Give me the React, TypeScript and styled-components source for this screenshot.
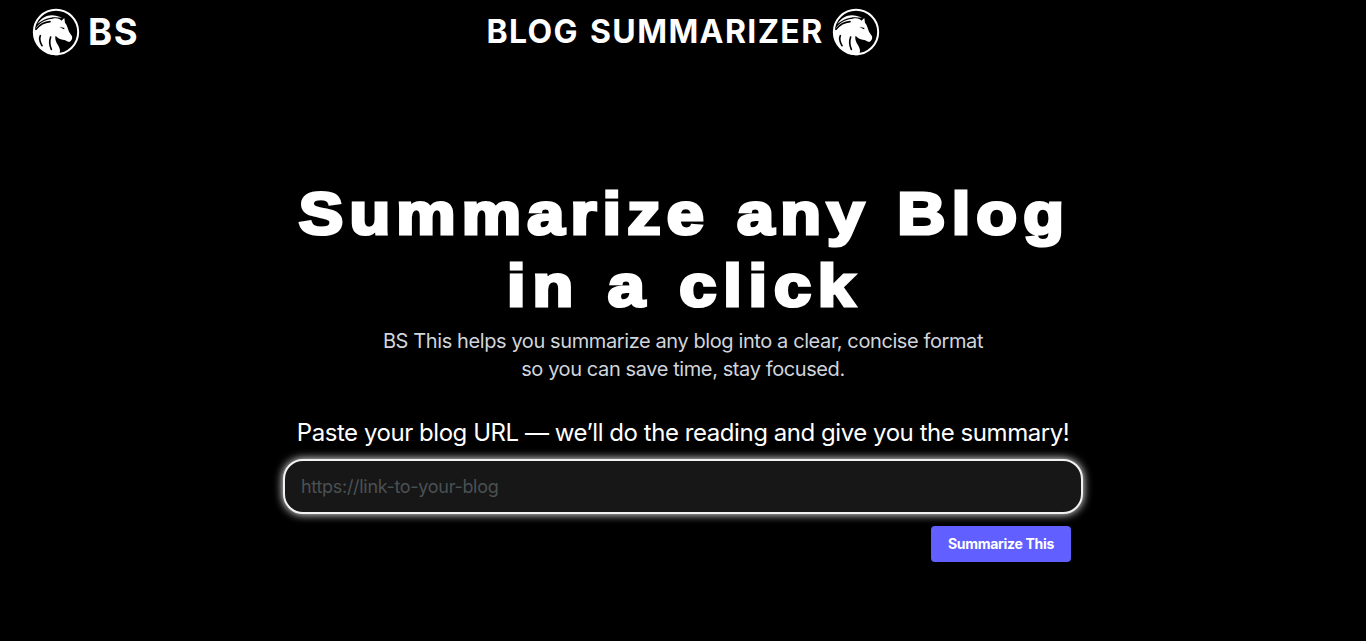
import React from "react";
import styled, { createGlobalStyle } from "styled-components";

const GlobalStyle = createGlobalStyle`
  * { box-sizing: border-box; }
  body {
    margin: 0;
    background: #000;
    color: #fff;
    font-family: Inter, "Liberation Sans", sans-serif;
  }
`;

const Page = styled.div`
  min-height: 641px;
  background: #000;
`;

const Header = styled.header`
  display: grid;
  grid-template-columns: 1fr auto 1fr;
  align-items: center;
  height: 64px;
  padding: 0 32px;
`;

const Brand = styled.div`
  display: flex;
  align-items: center;
  gap: 8px;
`;

const BrandName = styled.span`
  font-size: 36.5px;
  line-height: 40px;
  font-weight: 700;
  letter-spacing: 1.5px;
`;

const SiteTitle = styled.span`
  font-size: 32px;
  line-height: 40px;
  font-weight: 700;
  letter-spacing: 1.4px;
  word-spacing: 2px;
`;

const Logo = styled.svg`
  display: block;
  width: 48px;
  height: 48px;
`;

const Main = styled.main`
  display: flex;
  flex-direction: column;
  align-items: center;
  padding-top: 114px;
`;

const Headline = styled.h1`
  margin: 0;
  padding-left: 2px;
  font-family: "Liberation Sans", Arial, sans-serif;
  font-size: 58.5px;
  line-height: 72px;
  font-weight: 700;
  text-align: center;
  white-space: nowrap;
  -webkit-text-stroke: 3.2px #fff;
  transform: scaleX(1.14);
`;

const HeadlineLine = styled.span<{ $spacing: number }>`
  display: block;
  letter-spacing: ${(p) => p.$spacing}px;
  word-spacing: 2px;
`;

const Lead = styled.p`
  margin: 5px 0 0;
  font-size: 20px;
  line-height: 28px;
  letter-spacing: -0.4px;
  text-align: center;
  color: #d1d5dc;
`;

const Form = styled.form`
  display: flex;
  flex-direction: column;
  width: 800px;
  margin-top: 32px;
`;

const Label = styled.label`
  height: 44px;
  font-size: 24px;
  line-height: 36px;
  letter-spacing: -0.45px;
  text-align: center;
  white-space: nowrap;
`;

const UrlInput = styled.input`
  height: 55px;
  padding: 0 16px 1px;
  border: 2px solid #f1f1f1;
  border-radius: 20px;
  outline: none;
  background: #171717;
  color: #fff;
  font: 400 18px Inter, "Liberation Sans", sans-serif;
  letter-spacing: -0.3px;
  box-shadow: 0 0 10px #fff;
  &::placeholder { color: #4a5154; opacity: 1; }
`;

const Submit = styled.button`
  align-self: flex-end;
  width: 140px;
  height: 36px;
  margin: 12px 12px 0 0;
  padding: 0 0 1px;
  border: 0;
  border-radius: 4px;
  background: #615fff;
  color: #fff;
  font: 700 14px Inter, "Liberation Sans", sans-serif;
  letter-spacing: -0.3px;
`;

const HorseLogo = () => (
  <Logo viewBox="6 6 144 144" aria-hidden="true">
    <circle cx="78" cy="78" r="66.5" fill="#000" stroke="#fff" strokeWidth="6" />
    <path
      fill="#fff"
      d="M12 80C17 58 40 40 68 38C81 35 91 39 94 44L103 36L105 50C112 57 113 67 117 77L126 91C128 98 124 106 118 108C111 106 106 101 98 101C90 100 82 96 77 89C73 99 80 110 85 119C91 129 92 138 86 148C69 149 48 142 37 128C20 117 9 98 12 80Z"
    />
    <path fill="#fff" d="M22 54C39 26 68 21 96 36C66 29 43 38 22 54Z" />
    <path
      fill="none"
      stroke="#000"
      strokeWidth="5"
      strokeLinecap="round"
      d="M18 70C30 55 44 48 60 47M36 119C29 107 27 98 31 89M64 130C58 117 58 104 62 93"
    />
    <path fill="#000" d="M88 62L104 66L101 70Z" />
  </Logo>
);

export default function App() {
  return (
    <Page>
      <GlobalStyle />
      <Header>
        <Brand>
          <HorseLogo />
          <BrandName>BS</BrandName>
        </Brand>
        <Brand>
          <SiteTitle>BLOG SUMMARIZER</SiteTitle>
          <HorseLogo />
        </Brand>
      </Header>
      <Main>
        <Headline>
          <HeadlineLine $spacing={5.4}>Summarize any Blog</HeadlineLine>
          <HeadlineLine $spacing={6}>in a click</HeadlineLine>
        </Headline>
        <Lead>
          BS This helps you summarize any blog into a clear, concise format
          <br />
          so you can save time, stay focused.
        </Lead>
        <Form onSubmit={(e) => e.preventDefault()}>
          <Label htmlFor="url">Paste your blog URL — we’ll do the reading and give you the summary!</Label>
          <UrlInput id="url" placeholder="https://link-to-your-blog" />
          <Submit type="submit">Summarize This</Submit>
        </Form>
      </Main>
    </Page>
  );
}
